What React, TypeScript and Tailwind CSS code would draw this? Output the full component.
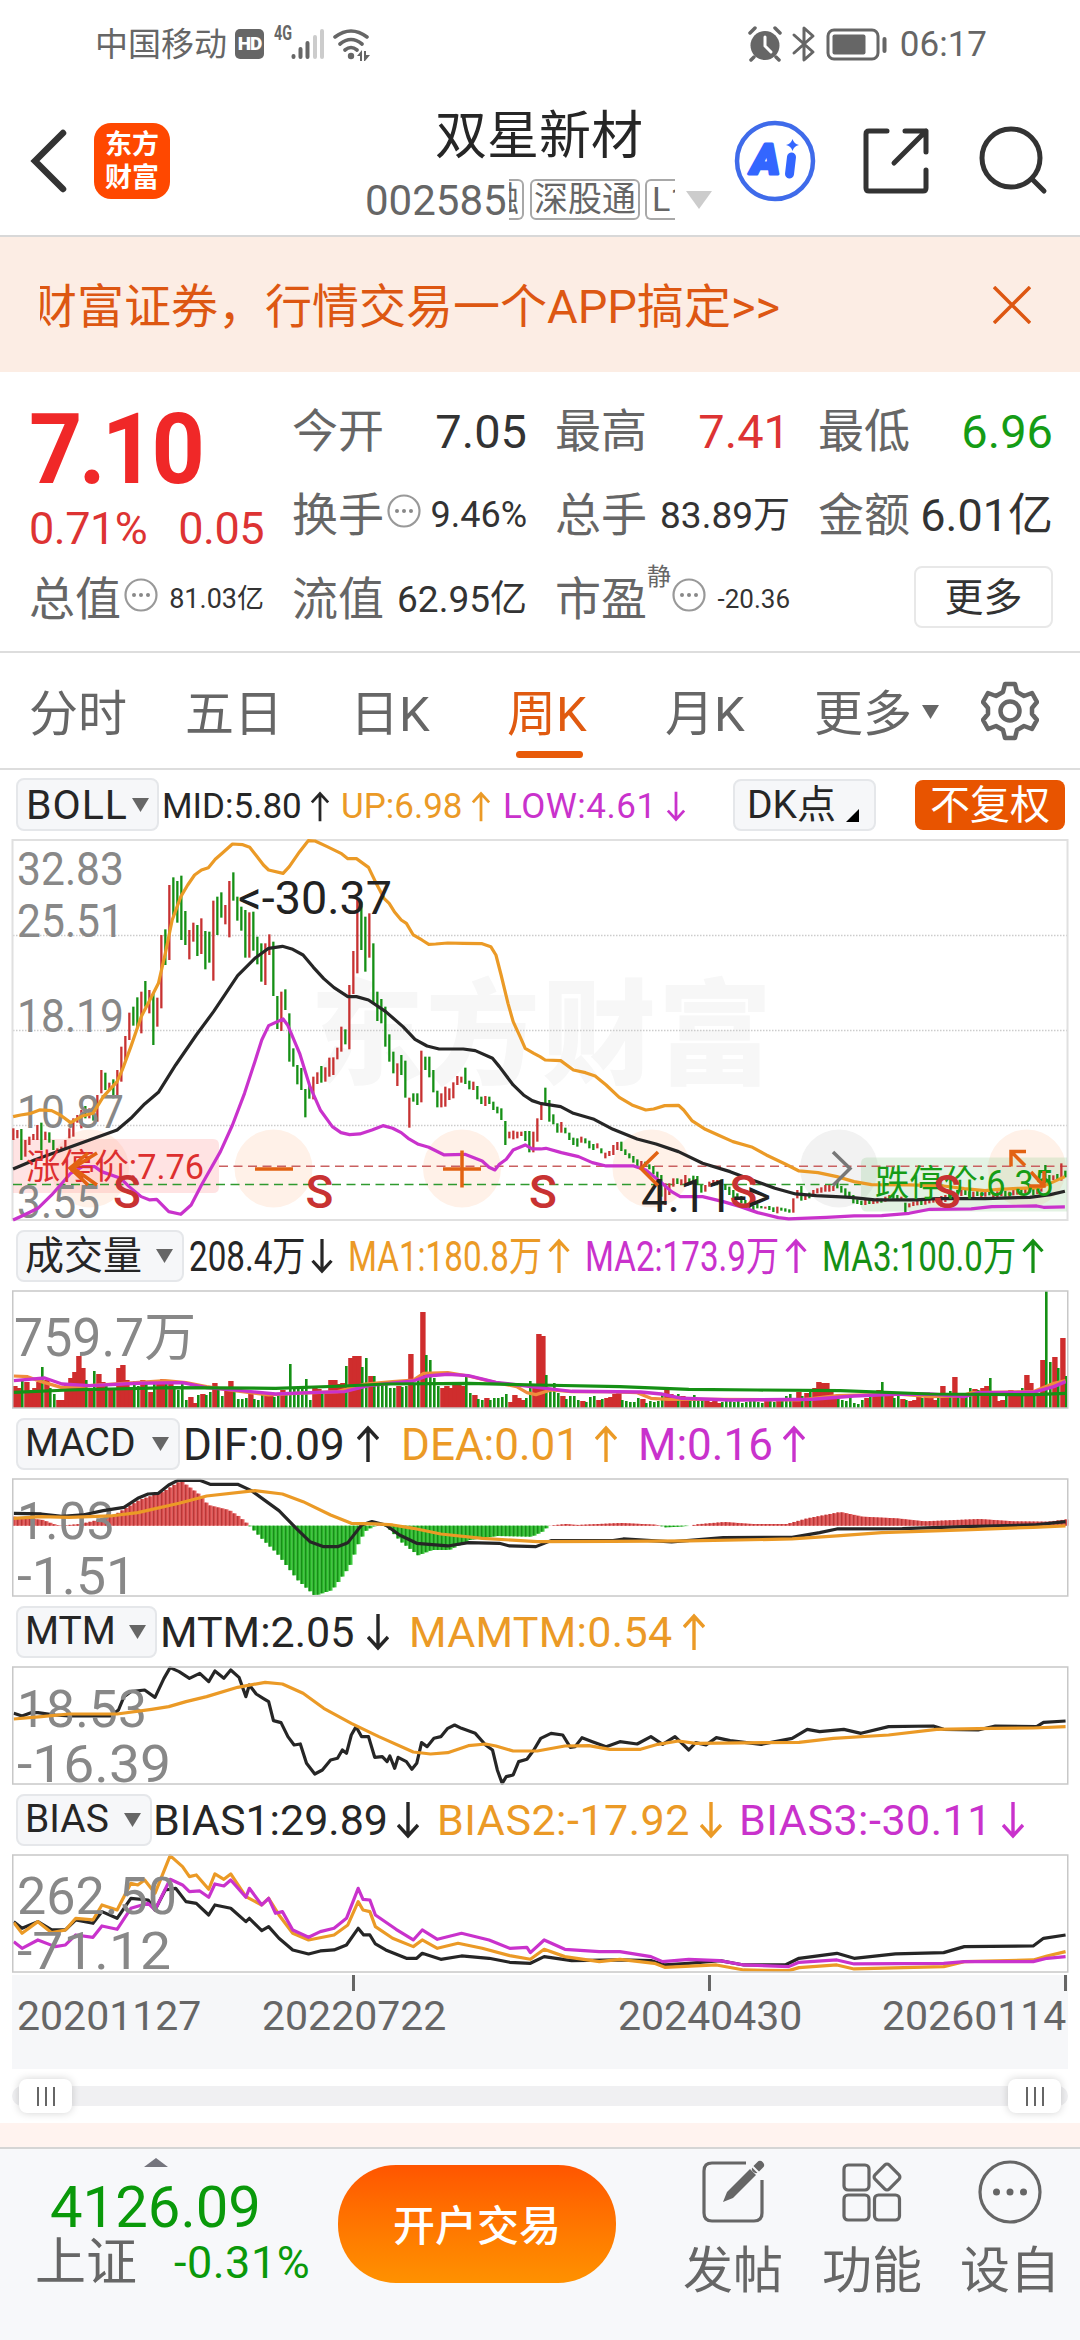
import type { ReactNode } from 'react';
import clsx from 'clsx';

type Dir = 'up' | 'down';

interface Stat {
  text: string;
  dir: Dir;
  className: string;
  textClassName?: string;
}

const RED = '#c73232';
const GREEN = '#159015';
const ORANGE = '#eb9a26';
const MAGENTA = '#c932cc';
const BLACK = '#262626';

// one entry per week: colour, high, low
const CANDLES = `
r895-930 r900-925 g897-990 r930-980 r920-945 r912-930 r885-930 g878-960 r905-930 g907-938
g930-960 r955-965 r950-962 r930-960 r895-925 r865-920 r855-878 r840-895 g828-865 r835-865
g832-872 r795-875 r720-790 g728-780 r758-780 g748-805 r720-800 r650-755 r618-690 r548-630
g530-587 g502-592 r485-610 g453-530 r480-550 g490-645 r503-590 r315-535 g298-405 r165-390
g142-260 g153-278 g137-330 g243-345 r300-388 r278-335 g285-378 r265-372 g303-418 g305-398
r212-452 g200-315 g187-263 r225-283 r153-322 g127-212 g200-272 g230-302 g240-383 r247-383
g245-362 g320-403 g340-455 r340-465 r313-375 g335-498 g498-597 r485-603 g478-540 g550-695
g655-710 g705-763 g714-780 g777-862 g765-806 r740-808 r727-762 g708-758 r712-755 r683-740
r682-735 r653-688 r590-665 g598-643 r465-658 r363-492 r210-430 g215-360 g260-425 r250-383
g340-520 g485-573 g507-580 g530-650 g613-695 g665-730 r700-768 g675-735 g692-803 r803-893
g790-815 g790-825 r662-817 g680-720 g680-742 g720-787 g782-832 r790-832 r770-830 r775-810
r757-805 r738-765 r740-758 g713-762 g752-778 r755-780 g768-808 g800-822 r798-828 g800-822
g815-840 g830-850 g835-870 g873-945 r905-925 r902-928 r905-925 r905-918 g903-933 g903-967
r905-967 r865-935 r820-870 g773-820 g810-875 g853-883 g880-908 r876-908 g893-910 g908-930
g923-945 g925-950 r920-938 g925-940 g932-955 g942-960 r940-955 g955-970 r968-985 r963-978
r945-975 r936-960 g935-963 g958-975 g970-985 g978-998 g988-1010 r993-1015 g995-1010 g1003-1018
g1008-1033 g1025-1050 g1035-1100 r1060-1125 r1060-1095 r1045-1070 g1045-1062 r1048-1065 r1035-1060 g1045-1062
g1037-1062 g1038-1065 g1065-1088 r1065-1085 r1055-1070 r1050-1068 r1050-1062 g1048-1070 g1062-1080 g1070-1095
g1080-1105 g1090-1110 g1098-1120 g1110-1128 g1120-1135 g1128-1140 g1122-1135 g1128-1135 r1130-1136 g1128-1140
g1132-1146 r1130-1150 g1133-1142 g1135-1145 g1138-1148 r1105-1148 r1080-1105 g1068-1112 r1093-1110 g1088-1105
r1080-1100 r1075-1090 r1072-1088 r1065-1085 r1065-1085 r1068-1083 g1055-1075 g1068-1088 g1075-1098 g1085-1105
g1095-1120 g1108-1122 g1112-1125 r1108-1125 g1110-1122 r1112-1122 r1105-1120 g1106-1118 r1100-1115 r1095-1112
g1092-1106 g1095-1110 r1100-1112 g1118-1148 r1120-1132 r1115-1128 r1112-1126 g1110-1125 r1108-1124 r1104-1120
r1104-1118 g1106-1118 r1098-1130 r1095-1116 g1090-1108 r1085-1108 g1080-1100 r1078-1098 g1080-1095 g1084-1100
r1085-1102 g1082-1098 r1088-1102 r1086-1100 g1084-1096 r1088-1104 r1084-1102 r1080-1098 g1082-1100
r1085-1100 r1078-1096 r1076-1094 g1074-1092 r1072-1090 r1068-1088 g1072-1096 r1066-1092 r1058-1085
g1005-1060 g1035-1058 r1036-1050 g1032-1050 r1000-1052 g1022-1042
`.trim().split(/\s+/).map((s) => {
  const [high, low] = s.slice(1).split('-').map(Number);
  return { up: s[0] === 'r', high, low };
});

const VOLUMES = [
  22, 20, 28, 26, 18, 20, 26, 41, 28, 20, 14, 8, 8, 25, 30, 36, 52, 40, 28, 20,
  37, 34, 26, 24, 18, 20, 40, 43, 28, 20, 27, 22, 28, 24, 16, 25, 25, 29, 27, 27,
  20, 18, 24, 8, 11, 5, 13, 14, 13, 16, 25, 20, 12, 17, 27, 16, 9, 9, 10, 15,
  9, 8, 14, 12, 12, 11, 15, 18, 14, 44, 19, 22, 20, 29, 8, 20, 19, 14, 17, 28,
  28, 24, 25, 42, 50, 52, 52, 41, 50, 32, 32, 22, 24, 24, 20, 20, 22, 21, 22, 54,
  24, 28, 96, 53, 48, 30, 22, 20, 22, 20, 25, 24, 22, 32, 15, 13, 9, 8, 10, 8,
  10, 10, 11, 14, 6, 13, 10, 8, 10, 27, 22, 74, 72, 33, 17, 25, 15, 12, 9, 12,
  12, 8, 7, 6, 11, 12, 8, 9, 10, 11, 14, 16, 8, 7, 6, 6, 10, 9, 5, 7,
  6, 7, 14, 18, 14, 12, 14, 12, 8, 9, 13, 8, 9, 7, 6, 8, 5, 6, 7, 8,
  6, 7, 5, 6, 7, 9, 6, 5, 7, 8, 6, 7, 8, 12, 14, 10, 16, 12, 15, 16,
  20, 26, 25, 25, 16, 9, 10, 8, 7, 11, 5, 4, 8, 10, 12, 15, 18, 26, 14, 16,
  10, 12, 9, 8, 7, 8, 11, 10, 12, 10, 8, 10, 22, 14, 17, 31, 14, 13, 12, 20,
  19, 18, 20, 22, 30, 12, 7, 8, 12, 18, 14, 16, 20, 33, 25, 16, 14, 48, 117, 46,
  51, 40, 70, 32,
];

const MACD_SHAPE = '20,890 60,900 75,912 85,917 115,912 160,890 200,840 235,815 260,782 285,820 300,855 330,870 345,890 360,917 380,960 400,1000 430,1080 455,1127 480,1110 505,1040 520,960 530,930 545,915 560,920 580,965 605,1006 625,990 650,990 680,960 720,948 770,950 785,935 795,917 805,915 820,912 835,915 900,909 950,914 965,922 985,920 1000,917 1010,913 1050,906 1090,912 1140,912 1170,895 1218,876 1250,890 1300,895 1340,904 1420,897 1470,904 1520,905 1547,898'
  .split(' ')
  .map((p) => p.split(',').map(Number));

function macdAt(x: number): number {
  const i = MACD_SHAPE.findIndex((p) => p[0] >= x);
  if (i <= 0) return i === 0 ? MACD_SHAPE[0][1] : MACD_SHAPE[MACD_SHAPE.length - 1][1];
  const [x0, y0] = MACD_SHAPE[i - 1];
  const [x1, y1] = MACD_SHAPE[i];
  return y0 + ((y1 - y0) * (x - x0)) / (x1 - x0);
}

function Line({ points, color, width = 3.2 }: { points: string; color: string; width?: number }) {
  return (
    <polyline
      points={points}
      fill="none"
      stroke={color}
      strokeWidth={width}
      strokeLinejoin="round"
      vectorEffect="non-scaling-stroke"
    />
  );
}

function AxisLabel({ x = 17, y, w, size = 46, children }: { x?: number; y: number; w: number; size?: number; children: string }) {
  return (
    <text x={x} y={y} fontSize={size} textLength={w} lengthAdjust="spacingAndGlyphs" fill="#888">
      {children}
    </text>
  );
}

function Arrow({ dir }: { dir: Dir }) {
  return (
    <svg viewBox="0 0 22 38" className="h-full w-[22px]" fill="none" stroke="currentColor" strokeWidth="3.4">
      <path d={dir === 'up' ? 'M11 37V3M1 14 11 3l10 11' : 'M11 1v34M1 24l10 11 10-11'} />
    </svg>
  );
}

function Caret({ className }: { className?: string }) {
  return (
    <svg viewBox="0 0 17 14" className={clsx('h-[14px] w-[17px] shrink-0 fill-current', className)}>
      <path d="M0 0h17L8.500 14z" />
    </svg>
  );
}

function MoreDot() {
  return (
    <svg viewBox="0 0 34 34" className="-mt-2 ml-[3px] h-[34px] w-[34px] shrink-0">
      <circle cx="17" cy="17" r="15.500" fill="none" stroke="#999" strokeWidth="2.200" />
      <circle cx="10" cy="17" r="2" fill="#888" />
      <circle cx="17" cy="17" r="2" fill="#888" />
      <circle cx="24" cy="17" r="2" fill="#888" />
    </svg>
  );
}

function IndicatorRow({ name, nameClass, stats, className = 'h-[69px]', arrowClass = 'h-[38px]' }: { name: string; nameClass: string; stats: Stat[]; className?: string; arrowClass?: string }) {
  return (
    <div className={clsx('flex items-center pl-4 leading-none', className)}>
      <div className={clsx('flex h-[52px] shrink-0 items-center justify-between rounded-lg border-2 border-[#e5e7ea] bg-[#f6f7f9] pr-[9px] pl-[7px] text-[39px] text-[#262626]', nameClass)}>
        <span>{name}</span>
        <Caret className="text-[#666]" />
      </div>
      {stats.map((s) => (
        <div key={s.text} className={clsx('flex shrink-0 items-center justify-between whitespace-nowrap', s.className)}>
          <span className={clsx('pt-[2px]', s.textClassName)}>{s.text}</span>
          <div className={arrowClass}>
            <Arrow dir={s.dir} />
          </div>
        </div>
      ))}
    </div>
  );
}

function StatusBar() {
  return (
    <div className="flex h-[88px] items-center pl-[95px] text-[#666]">
      <span className="w-[140px] text-[33px] leading-none">中国移动</span>
      <span className="flex h-[30px] w-[29px] items-center justify-center rounded-[5px] bg-[#666] text-[19px] font-black tracking-tighter text-white">HD</span>
      <svg viewBox="0 0 100 40" className="ml-[10px] h-[40px] w-[100px]">
        <text x="0" y="16" fontSize="20" fontWeight="bold" textLength="18" lengthAdjust="spacingAndGlyphs" fill="#666">4G</text>
        <g strokeWidth="4" strokeLinecap="round" stroke="#666">
          <path d="M19.500 32v1M26.500 25v8M33.500 19v14" />
          <path stroke="#ccc" d="M41 13v20M48 7v26" />
        </g>
        <g fill="none" stroke="#666" strokeWidth="3.600" strokeLinecap="round">
          <path d="M61 13q16-12 32 0M66 20q11-9 22 0M71 26q6-5 12 0" />
        </g>
        <circle cx="77" cy="32" r="3.200" fill="#666" />
        <path fill="#666" d="M83 32l5-6v11h-2v-5zM90 27h2v4h4l-5 6h-1z" />
      </svg>
      <div className="flex-1" />
      <svg viewBox="0 0 140 40" className="h-[40px] w-[140px]">
        <circle cx="17" cy="21.500" r="14.500" fill="#666" />
        <path d="M2 9l5-5M32 9l-5-5M6 33l-3 3M28 33l3 3" stroke="#666" strokeWidth="3.500" strokeLinecap="round" />
        <path d="M17 13v9l6 6" stroke="#fff" strokeWidth="3" fill="none" strokeLinecap="round" />
        <path d="M46 11l19 17-9 8V4l9 8-19 17" fill="none" stroke="#666" strokeWidth="3" strokeLinejoin="round" strokeLinecap="round" />
        <rect x="80" y="6" width="50" height="29" rx="6" fill="none" stroke="#666" strokeWidth="3" />
        <rect x="84.500" y="10.500" width="33" height="20" rx="2" fill="#666" />
        <path d="M136.500 15v12" stroke="#666" strokeWidth="4" strokeLinecap="round" />
      </svg>
      <span className="mr-[93px] ml-[12px] text-[35px] leading-none">06:17</span>
    </div>
  );
}

function Tag({ children, className }: { children: ReactNode; className: string }) {
  return (
    <div className={clsx('flex h-[41px] items-center border-2 border-[#a8a8a8] text-[34px] whitespace-nowrap text-[#666]', className)}>
      {children}
    </div>
  );
}

function Header() {
  return (
    <div className="flex h-[149px] items-start border-b-2 border-[#d8d8d8]">
      <svg viewBox="0 0 40 66" className="mt-[40px] ml-[29px] h-[66px] w-[40px]" fill="none" stroke="#333" strokeWidth="6.500" strokeLinecap="round">
        <path d="M34 5 6 33l28 28" />
      </svg>
      <div className="mt-[35px] ml-[25px] flex h-[76px] w-[76px] flex-col items-center justify-center gap-[5px] rounded-[17px] bg-[#ff4800] text-[27px] leading-[28px] font-bold text-white">
        <span>东方</span>
        <span>财富</span>
      </div>
      <div className="ml-[195px] flex w-[350px] flex-col">
        <span className="mt-[21px] ml-[70px] text-[52px] leading-[56px] text-[#262626]">双星新材</span>
        <div className="mt-[14px] flex h-[41px] items-center">
          <span className="w-[144px] pt-[2px] text-[42px] leading-none text-[#666]">002585</span>
          <Tag className="w-[15px] justify-end overflow-hidden rounded-r-md border-l-0 pr-[3px]">融</Tag>
          <Tag className="ml-[6px] w-[110px] justify-center rounded-md">深股通</Tag>
          <Tag className="ml-[5px] w-[30px] overflow-hidden rounded-l-md border-r-0 pl-[5px]">L1</Tag>
          <svg viewBox="0 0 26 18" className="ml-[11px] h-[18px] w-[26px]">
            <path d="M0 0h26L13 18z" fill="#ccc" />
          </svg>
        </div>
      </div>
      <svg viewBox="0 0 350 90" className="mt-[28px] ml-[10px] h-[90px] w-[350px]" fill="none" strokeLinecap="round" strokeLinejoin="round">
        <g transform="translate(-725 -116)">
          <circle cx="775" cy="161" r="38" stroke="#3f6bea" strokeWidth="4.500" />
          <text x="751" y="174" fontSize="42" fontWeight="900" fontStyle="italic" textLength="29" lengthAdjust="spacingAndGlyphs" fill="#3366ff" stroke="#3366ff" strokeWidth="3">A</text>
          <path d="M791.500 157l-2 17" stroke="#3366ff" strokeWidth="9" />
          <path d="M792.500 139q1.500 5 6.500 6-5 1-6.500 6-1.500-5-6.500-6 5-1 6.500-6z" fill="#3366ff" />
          <g stroke="#333" strokeWidth="5">
            <path d="M887 131h-18q-3 0-3 3v54q0 3 3 3h54q3 0 3-3v-18M905 131h21v21M926 131l-32 32" />
            <circle cx="1011" cy="158" r="29" />
            <path d="M1032 179l12 12" />
          </g>
        </g>
      </svg>
    </div>
  );
}

function Banner() {
  return (
    <div className="flex h-[135px] items-center bg-[#fcede4] pl-[40px] text-[#dd5712]">
      <div className="w-[953px] overflow-hidden pt-[5px]">
        <div className="-ml-[10px] text-[47px] leading-[60px] whitespace-nowrap">财富证券，行情交易一个APP搞定&gt;&gt;</div>
      </div>
      <svg viewBox="0 0 38 38" className="h-[38px] w-[38px]" stroke="currentColor" strokeWidth="3.500">
        <path d="M1 1l36 36M37 1 1 37" />
      </svg>
    </div>
  );
}

function Field({ label, value, icon, valueClass }: { label: string; value: string; icon?: ReactNode; valueClass: string }) {
  return (
    <div className="flex h-[84px] w-[235px] items-center leading-none whitespace-nowrap">
      <span className="text-[46px] text-[#666]">{label}</span>
      {icon}
      <span className={clsx('ml-auto', valueClass)}>{value}</span>
    </div>
  );
}

function QuotePanel() {
  return (
    <div className="flex h-[281px] gap-[28px] border-b-2 border-[#ddd] pt-[17px] pl-[29px]">
      <div className="w-[235px]">
        <div className="flex h-[103px] origin-left scale-x-[0.940] items-end text-[99px] leading-[86px] font-bold tracking-[-4px] text-[#f02828]">7.10</div>
        <div className="flex h-[65px] items-end justify-between text-[45px] leading-[57px] tracking-[-0.500px] text-[#dd3333]">
          <span>0.71%</span>
          <span>0.05</span>
        </div>
        <Field label="总值" value="81.03亿" icon={<MoreDot />} valueClass="text-[27px] text-[#333]" />
      </div>
      <div>
        <Field label="今开" value="7.05" valueClass="text-[47px] text-[#333]" />
        <Field label="换手" value="9.46%" icon={<MoreDot />} valueClass="text-[36px] text-[#333]" />
        <Field label="流值" value="62.95亿" valueClass="text-[37px] text-[#333]" />
      </div>
      <div>
        <Field label="最高" value="7.41" valueClass="text-[47px] text-[#dd3333]" />
        <Field label="总手" value="83.89万" valueClass="text-[37px] text-[#333]" />
        <Field
          label="市盈"
          value="-20.36"
          icon={
            <>
              <span className="-mt-[44px] -mr-[2px] text-[24px] text-[#666]">静</span>
              <MoreDot />
            </>
          }
          valueClass="text-[26px] text-[#333]"
        />
      </div>
      <div>
        <Field label="最低" value="6.96" valueClass="text-[47px] text-[#159c15]" />
        <Field label="金额" value="6.01亿" valueClass="text-[45px] text-[#333]" />
        <div className="flex h-[80px] w-[235px] items-center justify-end">
          <button className="h-[62px] w-[139px] rounded-lg border-2 border-[#e8e8e8] pt-[2px] text-[39px] leading-none text-[#333]">更多</button>
        </div>
      </div>
    </div>
  );
}

function PeriodTabs() {
  return (
    <div className="flex h-[117px] items-center border-b-2 border-[#ddd] pt-[8px] pl-[29px] text-[49px] leading-none whitespace-nowrap text-[#666]">
      <span className="w-[156px]">分时</span>
      <span className="w-[165px]">五日</span>
      <span className="w-[157px]">日K</span>
      <span className="relative w-[158px] text-[#e05a10]">
        周K
        <i className="absolute top-[61px] left-[9px] h-[7px] w-[67px] rounded-full bg-[#e85a08]" />
      </span>
      <span className="w-[149px]">月K</span>
      <span className="w-[108px]">更多</span>
      <Caret className="-mt-[5px]" />
      <svg viewBox="0 0 58 60" className="-mt-[8px] ml-[42px] h-[60px] w-[58px]" fill="none" stroke="#666" strokeWidth="4.500" strokeLinejoin="round">
        <path d="M24 3h10l2 8 7 4 8-3 5 9-5 6v6l5 6-5 9-8-3-7 4-2 8H24l-2-8-7-4-8 3-5-9 5-6v-6l-5-6 5-9 8 3 7-4z" />
        <circle cx="29" cy="30" r="9.500" />
      </svg>
    </div>
  );
}

function BollRow() {
  return (
    <div className="flex h-[69px] items-center pl-4 text-[35px] leading-none whitespace-nowrap text-[#262626]">
      <div className="flex h-[53px] w-[143px] items-center gap-[3px] rounded-lg border-2 border-[#e5e7ea] bg-[#f6f7f9] pl-[8px] text-[41px]">
        <span className="w-[103px] pt-[2px] tracking-[1px]">BOLL</span>
        <Caret className="text-[#666]" />
      </div>
      <div className="mt-[4px] ml-[3px] flex h-[31px] w-[169px] items-center justify-between">
        <span>MID:5.80</span>
        <Arrow dir="up" />
      </div>
      <div className="mt-[4px] ml-[10px] flex h-[31px] w-[151px] items-center justify-between text-[#eb9a26]">
        <span>UP:6.98</span>
        <Arrow dir="up" />
      </div>
      <div className="mt-[4px] ml-[11px] flex h-[31px] w-[184px] items-center justify-between text-[#c932cc]">
        <span className="tracking-[0.500px]">LOW:4.61</span>
        <Arrow dir="down" />
      </div>
      <div className="ml-[46px] flex h-[52px] w-[143px] items-center gap-[10px] rounded-lg border-2 border-[#e5e7ea] bg-[#f6f7f9] pl-[12px] text-[39px]">
        <span className="pt-[2px]">DK点</span>
        <svg viewBox="0 0 13 13" className="mt-[22px] h-[13px] w-[13px]">
          <path d="M13 0v13H0z" />
        </svg>
      </div>
      <div className="ml-[39px] flex h-[50px] w-[150px] items-center justify-center rounded-lg bg-[#e85400] pt-[3px] text-[40px] text-white">不复权</div>
    </div>
  );
}

function PriceChart() {
  return (
    <svg viewBox="0 839 1080 383" className="block h-[383px] w-[1080px]">
      <text x="310" y="1075" fontSize="114" fontWeight="900" textLength="462" fill="#f7f7f7">东方财富</text>
      <path d="M13 935.500h1054M13 1030.500h1054M13 1125.500h1054" stroke="#ccc" strokeWidth="1.300" strokeDasharray="1.500 1.500" />
      <rect x="12.500" y="840" width="1055" height="380" fill="none" stroke="#e0e0e0" strokeWidth="2" />
      {[90, 273.500, 462, 651.500, 1027].map((x) => (
        <circle key={x} cx={x} cy="1168.500" r="39" fill="#fff1e8" />
      ))}
      <circle cx="839" cy="1168.500" r="39" fill="#f2f2f2" />
      <path d="M13 1139h200q6 0 6 6v42q0 6-6 6H13z" fill="#ff9c9c" fillOpacity="0.280" />
      <path d="M1067 1157.500H867q-6 0-6 6v42q0 6 6 6h200z" fill="#9cd29c" fillOpacity="0.280" />
      <path d="M219 1166.300h848" stroke="#c96060" strokeWidth="1.500" strokeDasharray="9 5.500" />
      <path d="M13 1184.600h848" stroke="#2f9a2f" strokeWidth="1.500" strokeDasharray="9 5.500" />
      {CANDLES.map((c, i) => (
        <rect
          key={i}
          x={12.200 + i * 4}
          y={830 + c.high / 3}
          width="2.300"
          height={(c.low - c.high) / 3}
          fill={c.up ? RED : GREEN}
        />
      ))}
      <AxisLabel y={885} w={107}>32.83</AxisLabel>
      <AxisLabel y={937} w={107}>25.51</AxisLabel>
      <AxisLabel y={1032} w={107}>18.19</AxisLabel>
      <AxisLabel y={1127.500} w={107}>10.87</AxisLabel>
      <AxisLabel y={1218} w={83}>3.55</AxisLabel>
      <g transform="translate(0 830) scale(0.3444 0.3333)">
        <Line color={ORANGE} points="38,860 60,855 90,850 115,840 150,842 175,855 205,878 240,858 270,850 300,800 340,755 355,720 380,650 410,560 440,500 460,460 480,370 500,270 525,200 545,165 565,135 585,120 605,113 625,88 645,70 675,42 705,44 725,52 745,78 765,105 780,120 822,130 840,110 870,65 895,32 915,33 950,50 990,70 1010,86 1035,86 1070,112 1090,155 1115,205 1130,220 1145,245 1165,270 1180,280 1200,315 1225,330 1245,343 1265,342 1300,339 1345,340 1400,341 1425,350 1440,375 1455,435 1475,520 1490,575 1510,620 1525,655 1550,670 1568,680 1583,690 1628,692 1665,720 1700,728 1728,738 1760,765 1798,802 1835,825 1875,840 1898,837 1930,827 1970,826 1985,840 2010,873 2048,898 2085,915 2128,935 2185,952 2225,975 2280,1002 2320,1023 2375,1028 2430,1040 2480,1055 2530,1064 2640,1065 2740,1068 2800,1076 2860,1082 2900,1078 2960,1075 3020,1073 3060,1055 3092,1040" />
        <Line color={MAGENTA} points="38,1170 70,1155 110,1135 150,1095 180,1060 205,1030 240,1010 275,1010 295,1025 350,1045 375,1070 410,1100 435,1110 455,1108 490,1145 525,1153 555,1125 585,1065 640,965 675,885 710,790 740,695 760,630 780,587 822,567 835,585 870,670 900,770 930,840 965,890 990,908 1015,914 1045,912 1080,900 1112,887 1140,895 1165,908 1185,925 1215,943 1245,952 1290,975 1350,973 1400,993 1420,1012 1437,1020 1450,1003 1470,988 1490,960 1525,945 1545,957 1570,957 1585,955 1630,968 1680,980 1720,998 1760,1008 1840,1008 1875,1020 1915,1053 1950,1085 1975,1100 2040,1100 2100,1115 2150,1130 2200,1148 2260,1163 2290,1167 2400,1162 2480,1158 2560,1157 2640,1150 2700,1138 2820,1137 2880,1130 3010,1128 3030,1132 3092,1131" />
        <Line color={BLACK} points="38,1017 100,990 180,960 260,930 340,900 380,865 420,822 460,787 510,705 570,615 620,545 690,437 740,385 780,355 820,349 850,358 880,375 910,412 940,446 970,473 1010,500 1035,500 1070,510 1120,545 1170,590 1205,628 1240,648 1275,657 1345,657 1380,662 1430,685 1450,710 1490,765 1520,795 1545,812 1568,820 1628,830 1665,850 1725,868 1780,898 1850,927 1905,942 1970,965 2040,1000 2120,1025 2190,1052 2250,1075 2310,1092 2370,1097 2470,1102 2540,1110 2660,1110 2720,1106 2860,1106 2990,1102 3050,1094 3092,1084" />
      </g>
      <text x="26" y="1179" fontSize="35" textLength="178" lengthAdjust="spacingAndGlyphs" fill="#dd2f2f">涨停价:7.76</text>
      <text x="875" y="1196" fontSize="36" textLength="178" lengthAdjust="spacingAndGlyphs" fill="#169c16">跌停价:6.35</text>
      {[127, 319.500, 543, 743.500, 947].map((x) => (
        <text key={x} x={x} y="1208" fontSize="46" fontWeight="500" textAnchor="middle" fill="#c83232">S</text>
      ))}
      <text x="238" y="914" fontSize="46" textLength="154" lengthAdjust="spacingAndGlyphs" fill="#222">&lt;-30.37</text>
      <text x="641" y="1212" fontSize="46" textLength="130" lengthAdjust="spacingAndGlyphs" fill="#222">4.11-&gt;</text>
      <g fill="none" stroke="#e26212" strokeWidth="3.500">
        <path d="M97 1153l-24 15 24 17M88 1153l-18 15 18 17" />
        <path d="M255 1169h38M443 1169h38M462 1150.500v37" />
        <path d="M658 1152l-17 16.500 17 17" />
        <path d="M1026 1151.500h-15v15M1011 1151.500l14 14M1044 1171v15h-15M1044 1186l-13-14" />
      </g>
      <path d="M833 1152l17 16.500-17 17" fill="none" stroke="#777" strokeWidth="3.500" />
    </svg>
  );
}

function SubChart({ top, children }: { top: number; children: ReactNode }) {
  return (
    <svg viewBox={`0 ${top} 1080 119`} className="block h-[119px] w-[1080px]">
      {children}
      <rect x="12.750" y={top + 1} width="1055" height="117" fill="none" stroke="#c8c8c8" strokeWidth="1.500" />
    </svg>
  );
}

function VolumeChart() {
  return (
    <SubChart top={1290}>
      {VOLUMES.map((v, i) => {
        const c = CANDLES[Math.min(i, CANDLES.length - 1)];
        return <rect key={i} x={c.up ? 12.200 + i * 4 : 13 + i * 4} y={1408 - v} width={c.up ? 5.400 : 2.600} height={v} fill={c.up ? '#cf2d2d' : '#159015'} />;
      })}
      <AxisLabel x={14} y={1356} w={182} size={53}>759.7万</AxisLabel>
      <g transform="translate(0 1220) scale(0.6888 0.3333)">
        <Line color="#f08c3c" points="20,468 40,470 60,485 90,503 130,497 180,490 240,482 270,488 300,500 340,512 390,525 430,520 490,515 530,492 570,485 600,480 615,460 650,458 680,468 720,488 750,500 765,518 778,524 800,510 830,515 880,515 925,518 945,535 970,538 1040,538 1160,540 1215,527 1300,522 1350,530 1395,528 1410,518 1500,515 1530,490 1547,482" />
        <Line color={MAGENTA} width={3.4} points="20,482 65,474 90,492 130,497 200,490 265,488 300,503 350,512 400,522 450,518 500,515 535,497 600,483 620,468 650,463 680,467 720,487 780,502 830,514 930,516 960,522 990,535 1060,540 1180,538 1240,528 1300,523 1350,522 1400,530 1420,518 1500,517 1530,500 1547,485" />
        <Line color={GREEN} points="20,517 100,510 250,503 400,505 500,498 560,492 680,490 780,495 900,500 1000,508 1100,510 1220,512 1350,522 1500,524 1547,520" />
      </g>
    </SubChart>
  );
}

function MacdChart() {
  const zero = 1525.700;
  return (
    <SubChart top={1478}>
      {CANDLES.map((_, i) => {
        const x = 12.500 + i * 4;
        const y = 1220 + macdAt(x * 1.452) / 3;
        const up = y < zero;
        const h = Math.abs(y - zero);
        const top = Math.min(y, zero);
        return (
          <g key={i}>
            <rect x={x} y={top} width="4" height={h} fill={up ? '#e86060' : '#3ecb3e'} />
            <rect x={x} y={top} width="2" height={h} fill={up ? '#bc3636' : '#159015'} />
          </g>
        );
      })}
      <AxisLabel y={1539} w={98} size={52}>1.03</AxisLabel>
      <AxisLabel y={1594} w={119} size={52}>-1.51</AxisLabel>
      <g transform="translate(0 1220) scale(0.6888 0.3333)">
        <Line color={BLACK} points="20,880 60,882 90,889 120,885 150,872 180,862 200,835 215,822 230,820 245,795 258,781 290,781 305,793 345,793 365,812 385,842 405,872 430,925 450,965 470,980 490,980 505,968 525,915 540,905 560,915 580,945 605,970 650,978 680,968 725,970 740,978 778,980 800,962 890,962 905,957 975,966 1050,953 1150,952 1190,938 1215,927 1310,926 1400,920 1500,915 1547,905" />
        <Line color={ORANGE} points="20,895 60,890 100,892 160,888 200,878 260,850 300,828 370,812 410,822 440,845 480,885 510,910 545,912 570,915 600,925 640,942 700,955 780,965 890,964 1000,963 1150,957 1215,948 1280,938 1400,930 1500,922 1547,918" />
      </g>
    </SubChart>
  );
}

function MtmChart() {
  return (
    <SubChart top={1666}>
      <g transform="translate(0 1590) scale(0.6888 0.3333)">
        <Line color={BLACK} points="20,370 32,378 45,368 55,368 80,375 100,378 160,378 172,360 180,320 190,305 210,300 225,322 238,265 247,233 260,245 275,265 290,250 303,275 312,243 325,265 335,240 347,262 357,320 362,285 372,312 382,325 390,335 397,392 408,398 418,440 427,465 436,462 445,520 457,552 468,540 480,510 490,505 497,480 503,490 510,435 517,410 525,440 535,440 544,502 555,500 562,515 566,498 573,535 578,502 590,515 598,538 605,520 612,458 620,470 630,445 640,440 650,415 660,405 670,415 690,430 705,465 715,480 722,540 729,580 735,560 745,555 753,515 765,508 775,480 785,445 800,430 817,435 828,472 835,470 845,443 860,455 880,470 900,455 925,462 945,440 962,463 980,440 1000,480 1010,458 1025,465 1040,443 1060,452 1105,463 1150,445 1172,418 1190,425 1225,418 1250,430 1290,410 1355,408 1370,418 1420,420 1445,408 1505,410 1515,397 1547,393" />
      </g>
      <AxisLabel y={1727} w={130} size={52}>18.53</AxisLabel>
      <AxisLabel y={1782} w={154} size={52}>-16.39</AxisLabel>
      <g transform="translate(0 1590) scale(0.6888 0.3333)">
        <Line color={ORANGE} points="20,387 60,380 100,372 170,372 220,358 245,350 270,335 300,320 345,292 385,277 410,282 440,310 470,355 510,400 550,440 600,486 625,492 650,488 680,467 705,462 720,468 745,483 780,483 820,468 855,467 885,478 930,478 955,463 985,453 1010,460 1160,457 1210,445 1290,435 1360,418 1440,415 1500,414 1547,410" />
      </g>
    </SubChart>
  );
}

function BiasChart() {
  return (
    <SubChart top={1854}>
      <g transform="translate(0 1590) scale(0.6888 0.3333)">
        <Line color={BLACK} points="20,995 32,1015 55,995 75,1020 95,1020 110,990 135,1000 148,965 170,985 190,925 215,930 225,960 240,900 255,895 270,935 285,940 303,975 312,945 335,955 357,995 362,985 380,1022 390,1010 405,1045 425,1080 448,1092 465,1083 485,1080 503,1065 520,1015 528,1035 537,1035 545,1062 560,1080 590,1105 605,1105 613,1090 640,1108 670,1098 710,1105 740,1117 770,1120 790,1100 830,1112 900,1110 945,1112 965,1125 1000,1120 1045,1112 1080,1125 1140,1125 1160,1105 1215,1090 1240,1105 1300,1092 1370,1088 1400,1070 1500,1068 1515,1045 1547,1035" />
        <Line color={ORANGE} points="20,998 32,1030 55,995 75,1028 95,1020 110,985 135,990 148,945 170,960 190,880 200,885 210,870 225,910 247,797 265,830 275,860 285,855 303,898 312,852 325,868 335,852 357,920 380,945 390,925 405,975 425,1030 448,1050 485,1035 505,1005 520,935 527,960 537,965 545,1010 570,1045 600,1070 613,1050 635,1075 665,1060 700,1075 740,1097 770,1108 790,1078 820,1100 870,1115 900,1108 950,1120 965,1132 1040,1125 1080,1140 1145,1142 1160,1133 1215,1125 1240,1137 1370,1130 1400,1115 1500,1110 1520,1098 1547,1085" />
        <Line color={MAGENTA} points="20,1055 32,1075 55,1050 80,1070 95,1065 110,1035 135,1042 148,1008 170,1018 190,955 215,940 225,960 247,868 265,885 275,905 290,903 303,922 312,882 325,888 335,870 357,922 362,895 380,945 390,925 400,970 410,965 425,1020 448,1042 465,1025 485,1015 503,985 520,895 527,928 537,930 545,975 575,1018 600,1050 613,1020 635,1048 670,1030 710,1050 740,1075 765,1072 770,1088 790,1050 820,1078 870,1085 900,1085 945,1100 962,1115 1000,1108 1045,1112 1080,1125 1145,1130 1160,1117 1215,1110 1240,1122 1370,1120 1400,1115 1500,1115 1520,1105 1547,1100" />
      </g>
      <AxisLabel y={1914} w={160} size={52}>262.50</AxisLabel>
      <AxisLabel y={1969} w={154} size={52}>-71.12</AxisLabel>
    </SubChart>
  );
}

function DateAxis() {
  return (
    <div className="mx-[12px] mt-[2px] h-[94px] bg-[#f6f7f9]">
      <div className="flex h-[16px]">
        <i className="w-[343px] border-r-[3px] border-[#666]" />
        <i className="w-[356px] border-r-[3px] border-[#666]" />
        <i className="w-[356px] border-r-[3px] border-[#666]" />
      </div>
      <div className="flex pt-[3px] pl-[5px] text-[41px] leading-[44px] text-[#666]">
        <span className="w-[245px]">20201127</span>
        <span className="w-[356px]">20220722</span>
        <span className="w-[264px]">20240430</span>
        <span>20260114</span>
      </div>
    </div>
  );
}

function Handle() {
  return (
    <div className="flex h-[34px] w-[53px] items-center justify-center gap-[6px] rounded-lg bg-white shadow-[0_0_8px_rgba(0,0,0,0.18)]">
      <i className="h-[19px] w-[2px] bg-[#666]" />
      <i className="h-[19px] w-[2px] bg-[#666]" />
      <i className="h-[19px] w-[2px] bg-[#666]" />
    </div>
  );
}

function RangeSlider() {
  return (
    <div className="flex h-[54px] items-center px-[12px]">
      <div className="flex h-[20px] w-full items-center justify-between rounded-full bg-[#f0f0f2] px-[7px]">
        <Handle />
        <Handle />
      </div>
    </div>
  );
}

function BottomBar() {
  return (
    <div className="flex h-[193px] border-t-2 border-[#d5d5d5] bg-[#f7f8fa] leading-none whitespace-nowrap text-[#666]">
      <div className="flex w-[338px] flex-col">
        <svg viewBox="0 0 24 9" className="mt-[9px] ml-[144px] h-[9px] w-[24px]">
          <path d="M12 0l12 9H0z" fill="#75757d" />
        </svg>
        <span className="mt-[11px] ml-[50px] text-[58px] leading-[58px] text-[#0a990a]">4126.09</span>
        <div className="mt-[1px] flex items-center pl-[35px]">
          <span className="w-[139px] text-[51px] leading-[51px]">上证</span>
          <span className="text-[45px] tracking-[0.500px] text-[#0a990a]">-0.31%</span>
        </div>
      </div>
      <button className="mt-[16px] h-[118px] w-[278px] rounded-[58px] bg-linear-to-b from-[#ff5500] to-[#ff9100] pt-[6px] text-[42px] font-medium text-white">开户交易</button>
      <div className="ml-[65px] flex w-[104px] flex-col items-center">
        <svg viewBox="0 0 64 64" className="mt-[11px] h-[64px] w-[64px]" fill="none" stroke="#666" strokeWidth="3.200">
          <path d="M45 3H11q-8 0-8 8v42q0 8 8 8h42q8 0 8-8V20" />
          <path d="M22 42l4-10 23-23 6 6-23 23z" fill="#666" stroke="none" />
          <path d="M55 9l4-4" strokeWidth="8" strokeLinecap="round" />
          <path d="M50 5l9 9" stroke="#f7f8fa" strokeWidth="2" />
        </svg>
        <span className="mt-[22px] text-[50px]">发帖</span>
      </div>
      <div className="ml-[35px] flex w-[104px] flex-col items-center">
        <svg viewBox="0 0 64 64" className="mt-[11px] h-[64px] w-[64px]" fill="none" stroke="#666" strokeWidth="3.200">
          <rect x="4" y="5" width="25" height="25" rx="4" />
          <rect x="4" y="35" width="25" height="25" rx="4" />
          <rect x="34.500" y="35" width="25" height="25" rx="4" />
          <rect x="37" y="7" width="20" height="20" rx="3" transform="rotate(45 47 17)" />
        </svg>
        <span className="mt-[22px] text-[50px]">功能</span>
      </div>
      <div className="ml-[34px] flex w-[104px] flex-col items-center">
        <svg viewBox="0 0 64 64" className="mt-[11px] h-[64px] w-[64px]">
          <circle cx="32" cy="32" r="30" fill="none" stroke="#666" strokeWidth="3.200" />
          <circle cx="18.500" cy="32" r="3.500" fill="#666" />
          <circle cx="32" cy="32" r="3.500" fill="#666" />
          <circle cx="45.500" cy="32" r="3.500" fill="#666" />
        </svg>
        <span className="mt-[22px] text-[50px]">设自</span>
      </div>
    </div>
  );
}

export default function App() {
  return (
    <div className="flex h-[2340px] w-[1080px] flex-col overflow-hidden bg-white font-[Roboto,'Noto_Sans_CJK_SC',sans-serif] [&>*]:shrink-0">
      <StatusBar />
      <Header />
      <Banner />
      <QuotePanel />
      <PeriodTabs />
      <BollRow />
      <PriceChart />
      <IndicatorRow
        name="成交量"
        className="h-[68px]"
        nameClass="w-[168px]"
        arrowClass="h-[36px] -ml-7"
        stats={[
          { text: '208.4万', dir: 'down', className: 'ml-[5px] w-[144px] text-[42px] text-[#262626]', textClassName: 'w-[120px] origin-left scale-x-[0.790]' },
          { text: 'MA1:180.8万', dir: 'up', className: 'ml-[15px] w-[222px] text-[42px] text-[#eb9a26]', textClassName: 'w-[196px] origin-left scale-x-[0.790]' },
          { text: 'MA2:173.9万', dir: 'up', className: 'ml-[15px] w-[222px] text-[42px] text-[#c932cc]', textClassName: 'w-[196px] origin-left scale-x-[0.790]' },
          { text: 'MA3:100.0万', dir: 'up', className: 'ml-[15px] w-[222px] text-[42px] text-[#159015]', textClassName: 'w-[196px] origin-left scale-x-[0.790]' },
        ]}
      />
      <VolumeChart />
      <IndicatorRow
        name="MACD"
        nameClass="w-[164px]"
        stats={[
          { text: 'DIF:0.09', dir: 'up', className: 'ml-[3px] w-[196px] text-[44px] text-[#262626]' },
          { text: 'DEA:0.01', dir: 'up', className: 'ml-[22px] w-[216px] text-[44px] text-[#eb9a26]' },
          { text: 'M:0.16', dir: 'up', className: 'ml-[21px] w-[167px] text-[44px] text-[#c932cc]' },
        ]}
      />
      <MacdChart />
      <IndicatorRow
        name="MTM"
        nameClass="w-[141px]"
        stats={[
          { text: 'MTM:2.05', dir: 'down', className: 'ml-[3px] w-[229px] text-[43px] text-[#262626]' },
          { text: 'MAMTM:0.54', dir: 'up', className: 'ml-[20px] w-[296px] text-[43px] text-[#eb9a26]', textClassName: 'tracking-[0.300px]' },
        ]}
      />
      <MtmChart />
      <IndicatorRow
        name="BIAS"
        nameClass="w-[136px]"
        stats={[
          { text: 'BIAS1:29.89', dir: 'down', className: 'ml-[1px] w-[266px] text-[43px] text-[#262626]' },
          { text: 'BIAS2:-17.92', dir: 'down', className: 'ml-[18px] w-[285px] text-[43px] text-[#eb9a26]', textClassName: 'tracking-[0.500px]' },
          { text: 'BIAS3:-30.11', dir: 'down', className: 'ml-[17px] w-[285px] text-[43px] text-[#c932cc]', textClassName: 'tracking-[0.500px]' },
        ]}
      />
      <BiasChart />
      <DateAxis />
      <RangeSlider />
      <div className="h-[24px] bg-[#fff3ef]" />
      <BottomBar />
    </div>
  );
}
